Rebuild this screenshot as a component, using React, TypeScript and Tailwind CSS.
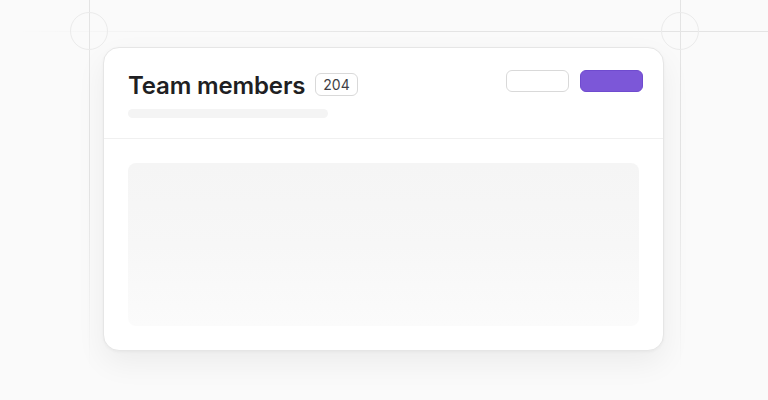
import React from 'react';

const GuideCircle = ({ className }: { className: string }) => (
  <div className={`absolute w-[38px] h-[38px] rounded-full border border-[#ebebeb] ${className}`} />
);

const App = () => {
  return (
    <div
      className="relative w-[768px] h-[400px] overflow-hidden bg-[#fafafa]"
      style={{ fontFamily: 'Inter, "Noto Sans", sans-serif' }}
    >
      {/* guide lines */}
      <div className="absolute left-[15px] right-0 top-[31px] h-px bg-gradient-to-r from-transparent via-[#e4e4e4] to-[#e4e4e4]" />
      <div className="absolute left-[89px] top-0 w-px h-[370px] bg-gradient-to-b from-[#e4e4e4] via-[#e4e4e4] to-transparent" />
      <div className="absolute left-[680px] top-0 w-px h-[370px] bg-gradient-to-b from-[#e4e4e4] via-[#e4e4e4] to-transparent" />
      <GuideCircle className="left-[70px] top-[12px]" />
      <GuideCircle className="left-[661px] top-[12px]" />

      <div className="relative pl-[103px] pt-[47px]">
        <div className="w-[561px] h-[304px] rounded-2xl border border-[#e6e6e6] bg-white shadow-[0_12px_30px_rgba(0,0,0,0.06),0_1px_3px_rgba(0,0,0,0.04)] flex flex-col overflow-hidden">
          {/* Header */}
          <div className="flex justify-between pl-6 pr-5 pt-[22px] h-[91px] border-b border-[#f0f0f0]">
            <div>
              <div className="flex items-center gap-[10px]">
                <h1 className="mt-[3px] text-[24px] leading-[26px] font-semibold text-[#1f1f23] tracking-[-0.15px]">Team members</h1>
                <span className="h-[23px] px-[7px] flex items-center rounded-md border border-[#d9d9d9] text-[14px] font-normal text-[#3f3f46]">204</span>
              </div>
              <div className="mt-[10px] w-[200px] h-[9px] rounded-full bg-[#f4f4f4]" />
            </div>
            <div className="flex gap-[11px]">
              <div className="w-[63px] h-[22px] rounded-md border border-[#d9d9d9] bg-white" />
              <div className="w-[63px] h-[22px] rounded-md border border-[#6f4bcf] bg-[#7c57d8]" />
            </div>
          </div>

          {/* Body */}
          <div className="flex-1 px-6 pt-6 pb-6">
            <div className="h-full rounded-lg bg-gradient-to-b from-[#f5f5f5] via-[#f7f7f7] to-[#fbfbfb]" />
          </div>
        </div>
      </div>
    </div>
  );
};

export default App;
